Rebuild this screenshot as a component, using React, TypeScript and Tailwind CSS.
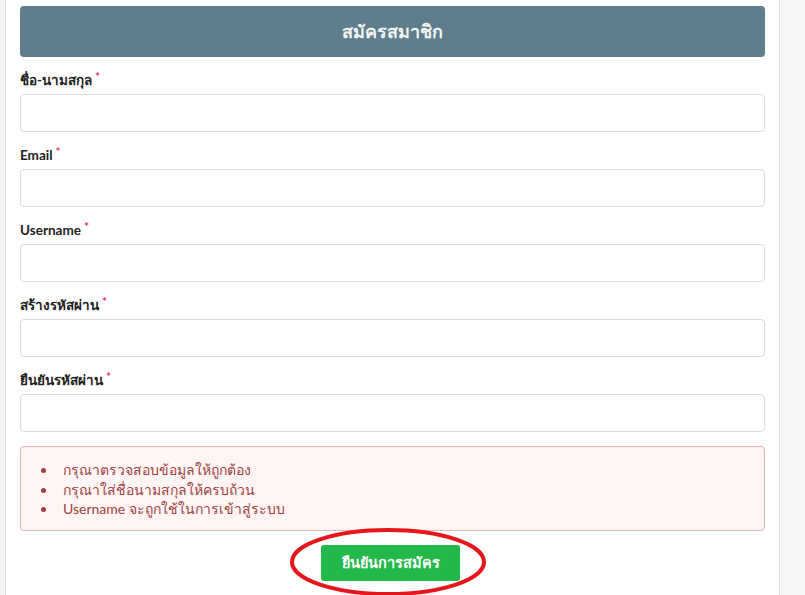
const fields = [
  "ชื่อ-นามสกุล",
  "Email",
  "Username",
  "สร้างรหัสผ่าน",
  "ยืนยันรหัสผ่าน",
];

const errors = [
  "กรุณาตรวจสอบข้อมูลให้ถูกต้อง",
  "กรุณาใส่ชื่อนามสกุลให้ครบถ้วน",
  "Username จะถูกใช้ในการเข้าสู่ระบบ",
];

const App = () => {
  return (
    <div
      className="min-h-[595px] bg-[#f5f5f5] overflow-hidden"
      style={{ fontFamily: '"Lato", "Noto Sans", "DejaVu Sans", sans-serif' }}
    >
      <div className="ml-[5px] w-[775px] min-h-[595px] bg-white border-x border-[#dddddd] px-[14px] pt-[6px]">
        <div className="h-[51px] rounded-[4px] bg-[#607d8b] flex items-center justify-center">
          <h1 className="text-[18px] font-bold text-[#f2f4f5]">สมัครสมาชิก</h1>
        </div>

        {fields.map((f) => (
          <div key={f}>
            <label className="block h-[37px] pt-[14px] leading-[18px] text-[13.5px] font-bold text-[#222] overflow-visible">
              {f}
              <span className="relative -top-[4px] ml-[3px] text-[12px] leading-none text-[#e4336b]">*</span>
            </label>
            <input
              type="text"
              className="block w-full h-[38px] rounded-[4px] border border-[#dcdcdc] bg-white"
            />
          </div>
        ))}

        <div className="mt-[14px] h-[85px] rounded-[4px] border border-[#e5b4b4] bg-[#fff5f5] pt-[13px] pl-[36px]">
          <ul className="list-disc text-[14px] leading-[19.5px] text-[#a0413f] marker:text-[#a0413f]">
            {errors.map((e) => (
              <li key={e} className="pl-[6px] h-[19.5px]">
                {e}
              </li>
            ))}
          </ul>
        </div>

        <div className="relative flex justify-center mt-[14px] pr-[4px]">
          <button className="w-[139px] h-[36px] rounded-[3px] bg-[#22b84a] text-white text-[14.5px] font-bold">
            ยืนยันการสมัคร
          </button>
          <svg
            className="absolute left-[268px] -top-[18px] pointer-events-none"
            width="200"
            height="70"
            viewBox="0 0 200 70"
          >
            <ellipse cx="100" cy="35" rx="96" ry="32" fill="none" stroke="#e6161d" strokeWidth="4" />
          </svg>
        </div>
      </div>
    </div>
  );
};

export default App;
